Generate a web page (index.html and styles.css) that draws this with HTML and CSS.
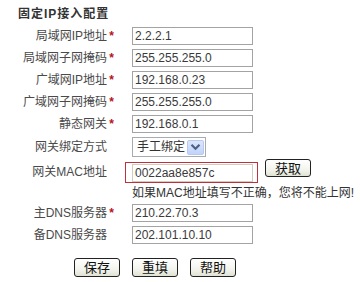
FILE: index.html
```html
<!DOCTYPE html>
<html lang="zh-CN">
<head>
<meta charset="utf-8">
<title>固定IP接入配置</title>
<link rel="stylesheet" href="styles.css">
</head>
<body>
<div class="page">
  <div class="title">固定IP接入配置</div>

  <div class="row r22">
    <label class="lbl">局域网IP地址<span class="req">*</span></label>
    <input class="txt" type="text" value="2.2.2.1">
  </div>
  <div class="row r22">
    <label class="lbl">局域网子网掩码<span class="req">*</span></label>
    <input class="txt" type="text" value="255.255.255.0">
  </div>
  <div class="row r22">
    <label class="lbl">广域网IP地址<span class="req">*</span></label>
    <input class="txt" type="text" value="192.168.0.23">
  </div>
  <div class="row r22">
    <label class="lbl">广域网子网掩码<span class="req">*</span></label>
    <input class="txt" type="text" value="255.255.255.0">
  </div>
  <div class="row r22">
    <label class="lbl">静态网关<span class="req">*</span></label>
    <input class="txt" type="text" value="192.168.0.1">
  </div>
  <div class="row r24">
    <label class="lbl">网关绑定方式<span class="req"></span></label>
    <div class="sel">
      <span class="sel-text">手工绑定</span>
      <span class="sel-btn">
        <svg width="11" height="8" viewBox="0 0 11 8"><path d="M1.5 1.8 L5.5 5.8 L9.5 1.8" fill="none" stroke="#4d6185" stroke-width="2.2"/></svg>
      </span>
    </div>
  </div>
  <div class="row r27 top">
    <label class="lbl lbl-mac">网关MAC地址<span class="req"></span></label>
    <div class="mac-line">
      <div class="mac-box"><input class="txt mac" type="text" value="0022aa8e857c"></div>
      <button class="btn get" type="button">获取</button>
    </div>
  </div>
  <div class="row r16">
    <span></span>
    <div class="hint">如果MAC地址填写不正确，您将不能上网!</div>
  </div>
  <div class="row r22">
    <label class="lbl">主DNS服务器<span class="req">*</span></label>
    <input class="txt" type="text" value="210.22.70.3">
  </div>
  <div class="row r22">
    <label class="lbl">备DNS服务器<span class="req"></span></label>
    <input class="txt" type="text" value="202.101.10.10">
  </div>

  <div class="actions">
    <button class="btn" type="button">保存</button>
    <button class="btn" type="button">重填</button>
    <button class="btn" type="button">帮助</button>
  </div>
</div>
</body>
</html>
```

FILE: styles.css
```css
* { box-sizing: border-box; }
html, body { margin: 0; padding: 0; background: #fff; }
body {
  font-family: "Liberation Sans", "Noto Sans CJK SC", sans-serif;
  font-size: 12px;
  color: #444;
  width: 360px;
  height: 282px;
  overflow: hidden;
}
.page { display: flex; flex-direction: column; }

.title {
  height: 25px;
  padding: 7px 0 0 18px;
  line-height: 14px;
  font-weight: bold;
  color: #333;
  letter-spacing: 1px;
}

.row {
  display: grid;
  grid-template-columns: 114px auto;
  column-gap: 18px;
  align-items: center;
}
.r22 { height: 22px; }
.r24 { height: 24px; }
.r27 { height: 27px; }
.r16 { height: 16px; align-items: start; }
.row.top { align-items: start; }

.lbl {
  text-align: right;
  white-space: nowrap;
  line-height: 14px;
  color: #4a4a4a;
}
.lbl-mac { margin-top: 6px; }
.req {
  display: inline-block;
  width: 7px;
  text-align: right;
  color: #b8101a;
  font-weight: bold;
}

.txt {
  width: 121px;
  height: 18px;
  margin: 0;
  padding: 0 2px;
  border: 1px solid #a3a3a3;
  font-family: "Liberation Sans", "Noto Sans CJK SC", sans-serif;
  font-size: 12px;
  color: #3a3a3a;
  background: #fff;
  outline: none;
}

.sel {
  width: 74px;
  height: 20px;
  border: 1px solid #a5acb2;
  display: flex;
  align-items: center;
  padding: 0 1px 0 4px;
  color: #333;
  background: #fff;
}
.sel-text { flex: 1; line-height: 14px; }
.sel-btn {
  width: 17px;
  height: 15px;
  border: 1px solid #b9c9ee;
  border-radius: 2px;
  background: linear-gradient(#dce6fd, #c1d3fb);
  display: flex;
  align-items: center;
  justify-content: center;
}
.sel-btn svg { display: block; }

.mac-line {
  display: flex;
  align-items: flex-start;
  margin-left: -7px;
}
.mac-box {
  margin-top: 3px;
  width: 133px;
  height: 21px;
  border: 1px solid #c0303a;
  padding: 1px 0 0 6px;
}
.txt.mac {
  height: 18px;
  border-color: #d2ccbc;
}

.btn {
  margin: 0;
  padding: 0;
  height: 19px;
  width: 46px;
  border: 1px solid #222;
  border-radius: 3px;
  background: linear-gradient(#ffffff, #f4f4ee 60%, #dfe3d2);
  font-family: "Liberation Sans", "Noto Sans CJK SC", sans-serif;
  font-size: 13px;
  line-height: 17px;
  color: #111;
}
.btn.get { margin-left: 7px; height: 18px; }

.hint {
  margin-left: 0;
  line-height: 14px;
  color: #333;
  white-space: nowrap;
}

.actions {
  display: flex;
  gap: 12px;
  padding: 12px 0 0 74px;
}
```
